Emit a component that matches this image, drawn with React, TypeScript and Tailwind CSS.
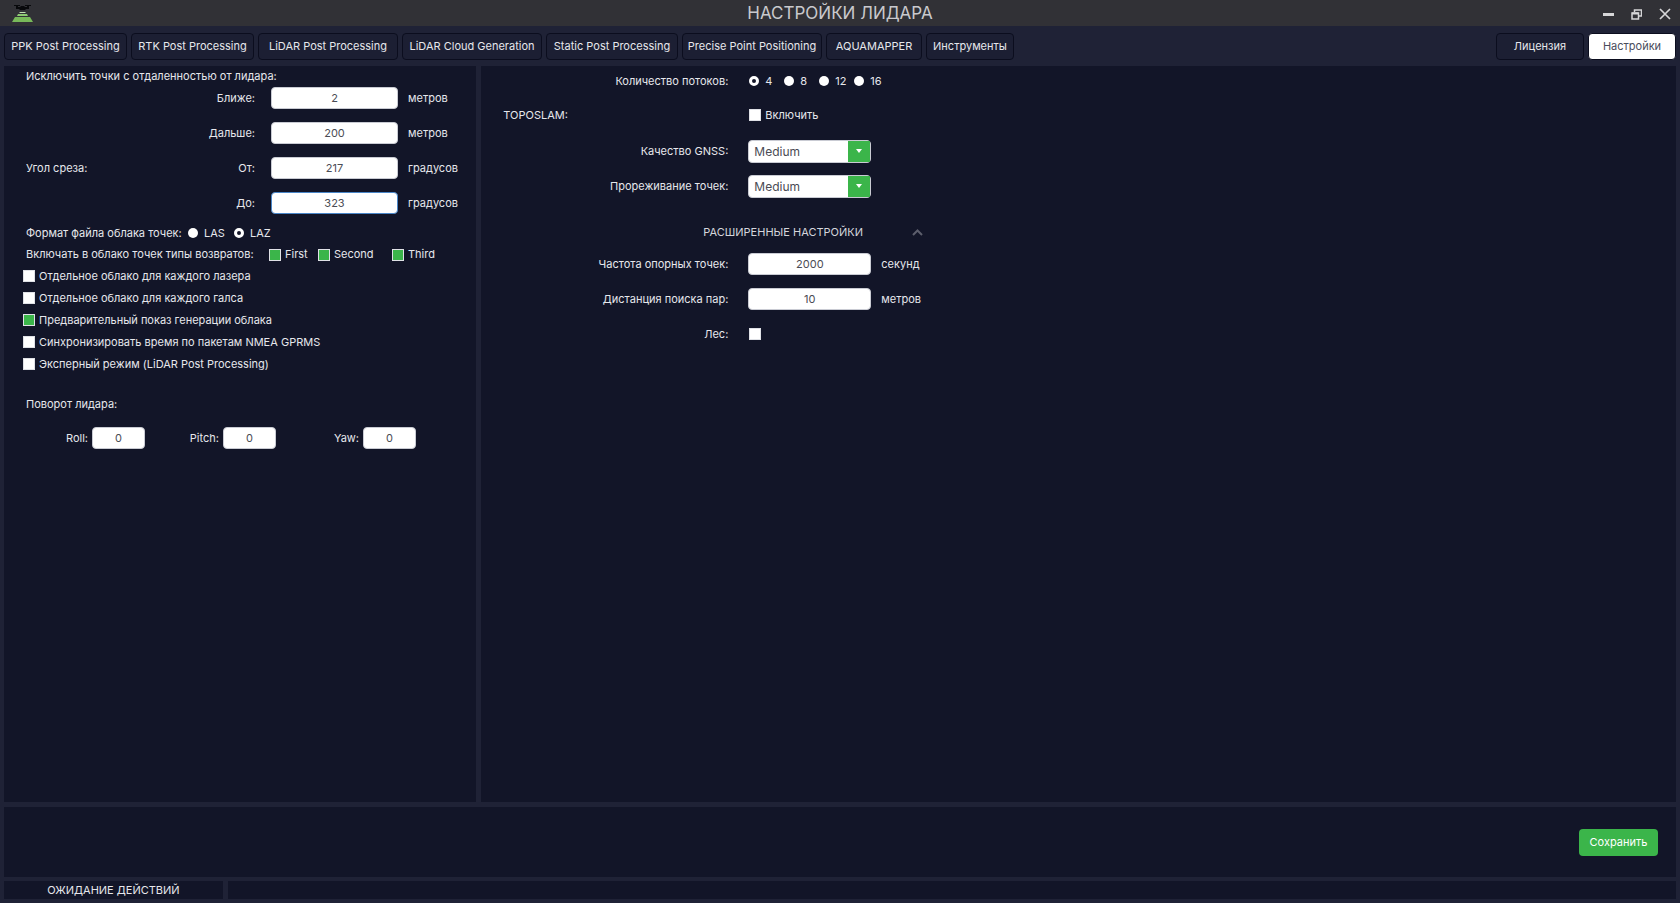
import React, { useState } from "react";
import clsx from "clsx";

const tabs = [
  { label: "PPK Post Processing", width: "w-[123px]" },
  { label: "RTK Post Processing", width: "w-[123px]" },
  { label: "LiDAR Post Processing", width: "w-[140px]" },
  { label: "LiDAR Cloud Generation", width: "w-[140px]" },
  { label: "Static Post Processing", width: "w-[132px]" },
  { label: "Precise Point Positioning", width: "w-[140px]" },
  { label: "AQUAMAPPER", width: "w-[96px]" },
  { label: "Инструменты", width: "w-[88px]" },
];

const inputClass =
  "h-[22px] min-w-0 rounded border bg-white text-center text-[11px] text-[#4a4c54] focus:outline-none focus:border-[#4a86c8]";

const Logo = () => (
  <svg width="22" height="20" viewBox="0 0 22 20" aria-hidden="true">
    <path d="M3 2h6v1H7v1h2l1-1h3l1 1h2V3h-2V2h6v1h-2v3h-3l-1 1H9L8 6H5V3H3z" fill="#08090c" />
    <path d="M9 9h5l1 1H8z" fill="#c3e0b4" />
    <path d="M7 11h9l1 2H6z" fill="#8cc873" />
    <path d="M4 14h15l3 5H1z" fill="#78b95a" />
  </svg>
);

const TabButton = ({ label, width, active }: { label: string; width: string; active?: boolean }) => (
  <button
    type="button"
    className={clsx(
      "h-[27px] shrink-0 whitespace-nowrap rounded border border-[#0b0d1e] text-center",
      width,
      active ? "bg-white text-[#4a4c5c]" : "bg-[#1c1f33] text-[#e6e7ec]"
    )}
  >
    {label}
  </button>
);

type CheckProps = { label?: string; name: string; checked?: boolean; className?: string };

const Check = ({ label, name, checked = false, className }: CheckProps) => {
  const [on, setOn] = useState(checked);
  return (
    <label className={clsx("flex h-[22px] items-center gap-1 whitespace-nowrap", className)}>
      <input
        type="checkbox"
        name={name}
        aria-label={label ? undefined : "Лес"}
        checked={on}
        onChange={() => setOn(!on)}
        className="size-3 shrink-0 appearance-none border border-[#dfe1e6] bg-white checked:bg-[#3bb54a]"
      />
      {label}
    </label>
  );
};

type RadioProps = { label: string; name: string; checked?: boolean; className?: string };

const Radio = ({ label, name, checked, className }: RadioProps) => (
  <label className={clsx("flex h-[22px] items-center gap-[6px] whitespace-nowrap", className)}>
    <input
      type="radio"
      name={name}
      value={label}
      defaultChecked={checked}
      className="size-[10px] shrink-0 appearance-none rounded-full bg-white checked:border-[3px] checked:border-white checked:bg-[#15172a]"
    />
    {label}
  </label>
);

type FieldProps = { id: string; label: string; value: string; unit: string; group?: string; active?: boolean };

const LeftField = ({ id, label, value, unit, group, active }: FieldProps) => (
  <div className="grid h-[22px] grid-cols-[110px_119px_127px_1fr] items-center">
    <span>{group}</span>
    <label htmlFor={id} className="text-right">
      {label}
    </label>
    <input
      id={id}
      defaultValue={value}
      className={clsx(inputClass, "ml-4 w-[127px]", active ? "border-[#4a86c8]" : "border-[#c9cbd3]")}
    />
    <span className="pl-[26px]">{unit}</span>
  </div>
);

const RotationField = ({ label, className }: { label: string; className: string }) => (
  <label className={clsx("flex items-center justify-end gap-1", className)}>
    {label}:
    <input name={label} defaultValue="0" className={clsx(inputClass, "w-[53px] border-[#c9cbd3]")} />
  </label>
);

const RightRow = ({
  label,
  htmlFor,
  group,
  className,
  children,
}: {
  label?: string;
  htmlFor?: string;
  group?: string;
  className?: string;
  children: React.ReactNode;
}) => (
  <div className={clsx("flex h-[22px] items-center", className)}>
    <span className="w-[75px] shrink-0">{group}</span>
    <label htmlFor={htmlFor} className="mr-5 w-[150px] shrink-0 text-right">
      {label}
    </label>
    {children}
  </div>
);

const QualitySelect = ({ id }: { id: string }) => (
  <div className="relative h-[23px] w-[123px]">
    <select
      id={id}
      defaultValue="Medium"
      className="size-full appearance-none rounded border border-[#c9cbd3] bg-white pl-[5px] pt-0.5 text-[12px] text-[#4a4c54] focus:outline-none"
    >
      <option>Low</option>
      <option>Medium</option>
      <option>High</option>
    </select>
    <span className="pointer-events-none absolute inset-y-px right-px flex w-[22px] items-center justify-center bg-[#3bb54a]">
      <svg width="6" height="4" viewBox="0 0 6 4" aria-hidden="true">
        <path d="M0 0h6L3 4z" fill="#fff" />
      </svg>
    </span>
  </div>
);

const LeftPanel = () => (
  <section className="bg-[#121528] pl-[22px]">
    <div className="flex h-[21px] items-center">Исключить точки с отдаленностью от лидара:</div>
    <div className="flex flex-col gap-[13px]">
      <LeftField id="near" label="Ближе:" value="2" unit="метров" />
      <LeftField id="far" label="Дальше:" value="200" unit="метров" />
      <LeftField id="angle-from" label="От:" value="217" unit="градусов" group="Угол среза:" />
      <LeftField id="angle-to" label="До:" value="323" unit="градусов" active />
    </div>
    <div className="mt-2 flex items-center">
      <span className="w-[162px] whitespace-nowrap">Формат файла облака точек:</span>
      <Radio name="format" label="LAS" className="w-[46px]" />
      <Radio name="format" label="LAZ" checked />
    </div>
    <div className="flex h-[21px] items-center">
      <span className="w-[243px] whitespace-nowrap">Включать в облако точек типы возвратов:</span>
      <Check name="first" label="First" checked className="w-[49px]" />
      <Check name="second" label="Second" checked className="w-[74px]" />
      <Check name="third" label="Third" checked />
    </div>
    <div className="-ml-[3px]">
      <Check name="per-laser" label="Отдельное облако для каждого лазера" />
      <Check name="per-tack" label="Отдельное облако для каждого галса" />
      <Check name="preview" label="Предварительный показ генерации облака" checked />
      <Check name="sync" label="Синхронизировать время по пакетам NMEA GPRMS" />
      <Check name="expert" label="Эксперный режим (LiDAR Post Processing)" />
    </div>
    <div className="mt-[18px] flex h-[22px] items-center">Поворот лидара:</div>
    <div className="mt-3 flex">
      <RotationField label="Roll" className="w-[119px]" />
      <RotationField label="Pitch" className="w-[131px]" />
      <RotationField label="Yaw" className="w-[140px]" />
    </div>
  </section>
);

const RightPanel = () => {
  const [open, setOpen] = useState(true);

  return (
    <section className="bg-[#121528] pl-[22px] pt-1">
      <RightRow label="Количество потоков:">
        <Radio name="threads" label="4" checked className="ml-px w-[35px]" />
        <Radio name="threads" label="8" className="w-[35px]" />
        <Radio name="threads" label="12" className="w-[35px]" />
        <Radio name="threads" label="16" />
      </RightRow>
      <RightRow group="TOPOSLAM:" className="mt-3">
        <Check name="toposlam" label="Включить" className="ml-px" />
      </RightRow>
      <RightRow label="Качество GNSS:" htmlFor="gnss" className="mt-[14px]">
        <QualitySelect id="gnss" />
      </RightRow>
      <RightRow label="Прореживание точек:" htmlFor="thinning" className="mt-[13px]">
        <QualitySelect id="thinning" />
      </RightRow>
      <button
        type="button"
        aria-expanded={open}
        onClick={() => setOpen(!open)}
        className="ml-[200px] mt-6 flex h-[22px] w-[220px] items-center justify-between text-[11px] text-[#d4d5dc]"
      >
        РАСШИРЕННЫЕ НАСТРОЙКИ
        <svg width="11" height="7" viewBox="0 0 11 7" fill="none" aria-hidden="true">
          <path d="M1 6l4.500-4.500L10 6" stroke="#5c5e6c" strokeWidth="2" />
        </svg>
      </button>
      {open && (
        <>
          <RightRow label="Частота опорных точек:" htmlFor="frequency" className="mt-[10px]">
            <input
              id="frequency"
              defaultValue="2000"
              className={clsx(inputClass, "w-[123px] border-[#c9cbd3]")}
            />
            <span className="ml-[10px]">секунд</span>
          </RightRow>
          <RightRow label="Дистанция поиска пар:" htmlFor="distance" className="mt-[13px]">
            <input
              id="distance"
              defaultValue="10"
              className={clsx(inputClass, "w-[123px] border-[#c9cbd3]")}
            />
            <span className="ml-[10px]">метров</span>
          </RightRow>
          <RightRow label="Лес:" className="mt-[13px]">
            <Check name="forest" className="ml-px" />
          </RightRow>
        </>
      )}
    </section>
  );
};

export default function App() {
  return (
    <div className="flex min-h-screen flex-col bg-[#1f2236] font-['Inter','Noto_Sans',sans-serif] text-[11px] text-[#e6e7ec]">
      <header className="grid h-[26px] grid-cols-[1fr_auto_1fr] items-center bg-[#313136] px-[11px]">
        <Logo />
        <h1 className="text-[17px] leading-5 text-[#c9c9cd]">НАСТРОЙКИ ЛИДАРА</h1>
        <div className="-mr-0.5 flex items-center justify-end gap-[17px] pt-0.5">
          <button type="button" aria-label="Свернуть">
            <svg width="11" height="11" viewBox="0 0 11 11">
              <path d="M0 5.500h11" stroke="#d6d6d8" strokeWidth="3" />
            </svg>
          </button>
          <button type="button" aria-label="Восстановить">
            <svg width="11" height="11" viewBox="0 0 11 11" fill="none" stroke="#d6d6d8">
              <path d="M3.500 3V1h7v6H8" strokeWidth="1.500" />
              <path d="M1 4h6.500v6H1z" strokeWidth="1.500" />
              <path d="M1 4.500h6.500" strokeWidth="2" />
            </svg>
          </button>
          <button type="button" aria-label="Закрыть">
            <svg width="12" height="12" viewBox="0 0 12 12">
              <path d="M1 1l10 10M11 1L1 11" stroke="#d6d6d8" strokeWidth="1.700" />
            </svg>
          </button>
        </div>
      </header>

      <nav className="flex gap-1 px-1 pb-1.5 pt-[7px]">
        {tabs.map((tab) => (
          <TabButton key={tab.label} {...tab} />
        ))}
        <div className="ml-auto flex gap-1">
          <TabButton label="Лицензия" width="w-[88px]" />
          <TabButton label="Настройки" width="w-[88px]" active />
        </div>
      </nav>

      <main className="grid flex-1 grid-cols-[17fr_43fr] gap-[5px] px-1">
        <LeftPanel />
        <RightPanel />
      </main>

      <div className="mx-1 mt-[5px] flex h-[70px] items-center justify-end bg-[#121528] pr-[18px]">
        <button type="button" className="h-[27px] w-[79px] rounded bg-[#3bb54a] text-white">
          Сохранить
        </button>
      </div>

      <footer className="mx-1 mb-1 mt-1 flex h-[18px] gap-[5px]">
        <div className="flex w-[219px] items-center justify-center bg-[#121528] text-[11px]">
          ОЖИДАНИЕ ДЕЙСТВИЙ
        </div>
        <div className="flex-1 bg-[#121528]" />
      </footer>
    </div>
  );
}
